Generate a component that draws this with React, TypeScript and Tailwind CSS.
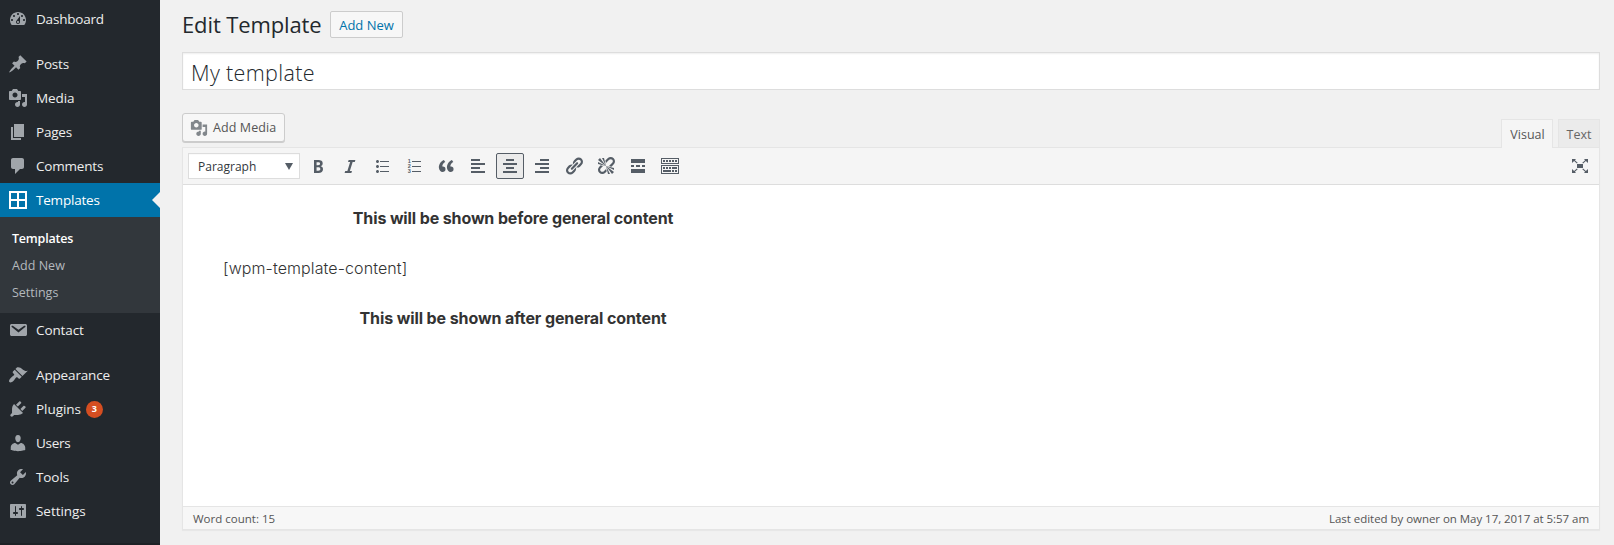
import type { ReactNode } from "react";

const paths = {
  dashboard:
    "M3.76 16h12.48c1.1-1.37 1.76-3.11 1.76-5 0-4.42-3.58-8-8-8s-8 3.58-8 8c0 1.89.66 3.63 1.76 5zM10 4c.55 0 1 .45 1 1s-.45 1-1 1-1-.45-1-1 .45-1 1-1zM6 6c.55 0 1 .45 1 1s-.45 1-1 1-1-.45-1-1 .45-1 1-1zm8 0c.55 0 1 .45 1 1s-.45 1-1 1-1-.45-1-1 .45-1 1-1zm-5.37 5.55L12 7v6c0 1.1-.9 2-2 2s-2-.9-2-2c0-.57.24-1.08.63-1.45zM4 10c.55 0 1 .45 1 1s-.45 1-1 1-1-.45-1-1 .45-1 1-1zm12 0c.55 0 1 .45 1 1s-.45 1-1 1-1-.45-1-1 .45-1 1-1zm-5 3c0-.55-.45-1-1-1s-1 .45-1 1 .45 1 1 1 1-.45 1-1z",
  posts:
    "M10.44 3.02l1.82-1.82 6.36 6.35-1.83 1.82c-1.05-.68-2.48-.57-3.41.36l-.75.75c-.92.93-1.04 2.35-.35 3.41l-1.83 1.82-2.41-2.41-2.8 2.79c-.42.42-3.38 2.71-3.8 2.29s1.86-3.39 2.28-3.81l2.79-2.79L4.1 9.36l1.83-1.82c1.05.69 2.48.57 3.4-.36l.75-.75c.93-.92 1.05-2.35.36-3.41z",
  media:
    "M13 11V4c0-.55-.45-1-1-1h-1.67L9 1H5L3.67 3H2c-.55 0-1 .45-1 1v7c0 .55.45 1 1 1h10c.55 0 1-.45 1-1zM7 4.5c1.38 0 2.5 1.12 2.5 2.5S8.38 9.5 7 9.5 4.5 8.38 4.5 7 5.62 4.5 7 4.5zM14 6h5v10.5c0 1.38-1.12 2.5-2.5 2.5S14 17.88 14 16.5s1.12-2.5 2.5-2.5c.17 0 .34.02.5.05V9h-3V6zm-4 8.05V13h2v3.5c0 1.38-1.12 2.5-2.5 2.5S7 17.88 7 16.5 8.12 14 9.5 14c.17 0 .34.02.5.05z",
  pages: "M6 15V2h10v13H6zm-1 1h8v2H3V5h2v11z",
  comments:
    "M5 2h9c1.1 0 2 .9 2 2v7c0 1.1-.9 2-2 2h-2l-5 5v-5H5c-1.1 0-2-.9-2-2V4c0-1.1.9-2 2-2z",
  grid: "M1 1h18v18H1V1zM3 3v6h6V3H3zm8 0v6h6V3h-6zM3 11v6h6v-6H3zm8 0v6h6v-6h-6z",
  email:
    "M3.87 4h13.25C18.37 4 19 4.59 19 5.79v8.42c0 1.19-.63 1.79-1.88 1.79H3.87c-1.25 0-1.88-.6-1.88-1.79V5.79c0-1.2.63-1.79 1.88-1.79zm6.62 8.6l6.74-5.53c.24-.2.43-.66.13-1.07-.29-.41-.82-.42-1.17-.17l-5.7 3.86L4.8 5.83c-.35-.25-.88-.24-1.17.17-.3.41-.11.87.13 1.07z",
  appearance:
    "M14.48 11.06L7.41 3.99l1.5-1.5c.5-.56 2.3-.47 3.51.32 1.21.8 1.43 1.28 2.91 2.1 1.18.64 2.45 1.26 4.45.85zm-.71.71L6.7 4.7 4.93 6.47c-.39.39-.39 1.02 0 1.41l1.06 1.06c.39.39.39 1.03 0 1.42-.6.6-1.43 1.11-2.21 1.69-.35.26-.7.53-1.01.84C1.43 14.23.4 16.08 1.4 17.07c.99 1 2.84-.03 4.18-1.36.31-.31.58-.66.85-1.02.57-.78 1.08-1.61 1.69-2.21.39-.39 1.02-.39 1.41 0l1.06 1.06c.39.39 1.02.39 1.41 0z",
  plugins:
    "M13.11 4.36L9.87 7.6 8 5.73l3.24-3.24c.35-.34 1.05-.2 1.56.32.52.51.66 1.21.31 1.55zm-8 1.77l.91-1.12 9.01 9.01-1.19.84c-.71.71-2.63 1.16-3.82 1.16H6.14L4.9 17.26c-.59.59-1.54.59-2.12 0-.59-.58-.59-1.53 0-2.12l1.24-1.24v-3.88c0-1.13.4-3.19 1.09-3.89zm7.26 3.97l3.24-3.24c.34-.35 1.04-.21 1.55.31.52.51.66 1.21.31 1.55l-3.24 3.25z",
  users:
    "M10 9.25c-2.27 0-2.73-3.44-2.73-3.44C7 4.02 7.82 2 9.97 2c2.16 0 2.98 2.02 2.71 3.81 0 0-.41 3.44-2.68 3.44zm0 2.57L12.72 10c2.39 0 4.52 2.33 4.52 4.53v2.49s-3.65 1.13-7.24 1.13c-3.65 0-7.24-1.13-7.24-1.13v-2.49c0-2.25 1.94-4.48 4.47-4.48z",
  tools:
    "M16.68 9.77c-1.34 1.34-3.3 1.67-4.95.99l-5.41 6.52c-.99.99-2.59.99-3.58 0s-.99-2.59 0-3.57l6.52-5.42c-.68-1.65-.35-3.61.99-4.95 1.28-1.28 3.12-1.62 4.72-1.06l-2.89 2.89 2.82 2.82 2.86-2.87c.53 1.58.18 3.39-1.08 4.65zM3.81 16.21c.4.39 1.04.39 1.43 0 .4-.4.4-1.04 0-1.43-.39-.4-1.03-.4-1.43 0-.39.39-.39 1.03 0 1.43z",
  settings:
    "M18 16V4c0-.55-.45-1-1-1H3c-.55 0-1 .45-1 1v12c0 .55.45 1 1 1h14c.55 0 1-.45 1-1zM8 11h1c.55 0 1 .45 1 1s-.45 1-1 1H8v1.5c0 .28-.22.5-.5.5s-.5-.22-.5-.5V13H6c-.55 0-1-.45-1-1s.45-1 1-1h1V5.5c0-.28.22-.5.5-.5s.5.22.5.5V11zm5-2h-1c-.55 0-1-.45-1-1s.45-1 1-1h1V5.5c0-.28.22-.5.5-.5s.5.22.5.5V7h1c.55 0 1 .45 1 1s-.45 1-1 1h-1v5.5c0 .28-.22.5-.5.5s-.5-.22-.5-.5V9z",
  bold: "M6 4v13h4.54c1.37 0 2.46-.33 3.26-1 .8-.66 1.2-1.58 1.2-2.77 0-.84-.17-1.51-.51-2.01s-.9-.85-1.67-1.03v-.09c.57-.1 1.02-.4 1.36-.9s.51-1.13.51-1.91c0-1.14-.39-1.98-1.17-2.5C12.75 4.26 11.5 4 9.78 4H6zm2.57 5.15V6.26h1.36c.73 0 1.27.11 1.61.32.34.22.51.58.51 1.07 0 .54-.16.92-.47 1.15s-.82.35-1.51.35h-1.5zm0 2.19h1.6c1.44 0 2.16.53 2.16 1.61 0 .6-.17 1.05-.51 1.34s-.86.43-1.57.43H8.57v-3.38z",
  italic: "M14.78 6h-2.13l-2.8 9h2.12l-.62 2H4.6l.62-2h2.14l2.8-9H8.03l.62-2h6.75z",
  bullets:
    "M5.5 7C4.67 7 4 6.33 4 5.5 4 4.68 4.67 4 5.5 4 6.32 4 7 4.68 7 5.5 7 6.33 6.32 7 5.5 7zM8 5h9v1H8V5zm-2.5 7c-.83 0-1.5-.67-1.5-1.5C4 9.68 4.67 9 5.5 9c.82 0 1.5.68 1.5 1.5 0 .83-.68 1.5-1.5 1.5zM8 10h9v1H8v-1zm-2.5 7c-.83 0-1.5-.67-1.5-1.5 0-.82.67-1.5 1.5-1.5.82 0 1.5.68 1.5 1.5 0 .83-.68 1.5-1.5 1.5zM8 15h9v1H8v-1z",
  quote:
    "M9.49 13.22c0-.74-.2-1.38-.61-1.9-.62-.78-1.83-.88-2.53-.72-.29-1.65 1.11-3.75 2.92-4.65L7.88 4c-2.73 1.3-5.42 4.28-4.96 8.05C3.21 14.43 4.59 16 6.54 16c.85 0 1.56-.25 2.12-.75s.83-1.18.83-2.03zm8.05 0c0-.74-.2-1.38-.61-1.9-.63-.78-1.83-.88-2.53-.72-.29-1.65 1.11-3.75 2.92-4.65L15.93 4c-2.73 1.3-5.41 4.28-4.95 8.05.29 2.38 1.66 3.95 3.61 3.95.85 0 1.56-.25 2.12-.75s.83-1.18.83-2.03z",
  left: "M12 5V3H3v2h9zm5 4V7H3v2h14zm-5 4v-2H3v2h9zm5 4v-2H3v2h14z",
  center: "M14 5V3H6v2h8zm3 4V7H3v2h14zm-3 4v-2H6v2h8zm3 4v-2H3v2h14z",
  right: "M17 5V3H8v2h9zm0 4V7H3v2h14zm0 4v-2H8v2h9zm0 4v-2H3v2h14z",
  link: "M17.74 2.76c1.68 1.69 1.68 4.41 0 6.1l-1.53 1.52c-1.12 1.12-2.7 1.47-4.14 1.09l2.62-2.61.76-.77.76-.76c.84-.84.84-2.2 0-3.04-.84-.85-2.2-.85-3.04 0l-.77.76-3.38 3.38c-.37-1.44-.02-3.02 1.1-4.14l1.52-1.53c1.69-1.68 4.42-1.68 6.1 0zM8.59 13.43l5.34-5.34c.42-.42.42-1.1 0-1.52-.44-.43-1.13-.39-1.53 0l-5.33 5.34c-.42.42-.42 1.1 0 1.52.44.43 1.13.39 1.52 0zm-.76 2.29l4.14-4.15c.38 1.44.03 3.02-1.09 4.14l-1.52 1.53c-1.69 1.68-4.41 1.68-6.1 0-1.68-1.68-1.68-4.42 0-6.1l1.53-1.52c1.12-1.12 2.7-1.47 4.14-1.1l-4.14 4.15c-.85.84-.85 2.2 0 3.05.84.84 2.2.84 3.04 0z",
  unlink:
    "M17.74 2.26c1.68 1.69 1.68 4.41 0 6.1l-1.53 1.52c-.32.33-.69.58-1.08.77L13 10l1.69-1.64.76-.77.76-.76c.84-.84.84-2.2 0-3.04-.84-.85-2.2-.85-3.04 0l-.77.76-.76.76L10 7l-.65-2.14c.19-.38.44-.75.77-1.07l1.52-1.53c1.69-1.68 4.42-1.68 6.1 0zM2 4l8 6-6-8zm4-2l4 8-2-8H6zM2 6l8 4-8-2V6zm7.36 7.69L10 13l.74 2.35-1.38 1.39c-1.69 1.68-4.41 1.68-6.1 0-1.68-1.68-1.68-4.42 0-6.1l1.39-1.38L7 10l-.69.64-1.52 1.53c-.85.84-.85 2.2 0 3.04.84.85 2.2.85 3.04 0zM18 16l-8-6 6 8zm-4 2l-4-8 2 8h2zm4-4l-8-4 8 2v2z",
  more: "M17 7V3H3v4h14zM6 11V9H3v2h3zm6 0V9H8v2h4zm5 0V9h-3v2h3zm0 6v-4H3v4h14z",
  sink: "M19 2v6H1V2h18zm-1 5V3H2v4h16zM5 4v2H3V4h2zm3 0v2H6V4h2zm3 0v2H9V4h2zm3 0v2h-2V4h2zm3 0v2h-2V4h2zm2 5v9H1V9h18zm-1 8v-7H2v7h16zM5 11v2H3v-2h2zm3 0v2H6v-2h2zm3 0v2H9v-2h2zm6 0v2h-5v-2h5zm-6 3v2H3v-2h8zm3 0v2h-2v-2h2zm3 0v2h-2v-2h2z",
  expand:
    "M2 3h4L4.900 4.200l2.800 2.600-.8.800-2.800-2.600L2 7zM18 3h-4l1.100 1.200-2.800 2.600.8.800 2.800-2.600L18 7zM2 17h4l-1.100-1.200 2.800-2.600-.8-.8-2.800 2.600L2 13zM18 17h-4l1.100-1.200-2.800-2.600.8-.8 2.800 2.600L18 13zM7 8h6v4H7z",
};

type IconName = keyof typeof paths;

function Icon({ name, className = "size-5" }: { name: IconName; className?: string }) {
  return (
    <svg
      viewBox="0 0 20 20"
      className={`shrink-0 ${className}`}
      fill="currentColor"
      fillRule={name === "expand" ? "nonzero" : "evenodd"}
    >
      <path d={paths[name]} />
    </svg>
  );
}

function MenuItem({
  icon,
  label,
  track,
  active,
  badge,
}: {
  icon: IconName;
  label: string;
  track: string;
  active?: boolean;
  badge?: string;
}) {
  return (
    <a className={`relative flex h-[34px] items-center pl-2 ${active ? "bg-[#0073aa] text-white" : "text-[#eee]"}`}>
      <Icon name={icon} className={`size-5 ${active ? "text-white" : "text-[#a0a5aa]"}`} />
      <span className={`ml-2 text-[13.5px] font-medium leading-[18px] ${track}`}>{label}</span>
      {badge && (
        <span className="ml-[5px] flex size-[17px] items-center justify-center rounded-full bg-[#d54e21] text-[9px] font-bold text-white">
          {badge}
        </span>
      )}
      {active && (
        <span className="absolute right-0 top-[9px] border-y-8 border-r-8 border-y-transparent border-r-[#f1f1f1]" />
      )}
    </a>
  );
}

function Tool({ children, active }: { children: ReactNode; active?: boolean }) {
  return (
    <button
      className={`flex h-[26px] w-7 shrink-0 items-center justify-center rounded-[2px] border text-[#555d66] ${
        active ? "border-[#555d66] bg-[#ebebeb]" : "border-transparent"
      }`}
    >
      {children}
    </button>
  );
}

export default function App() {
  return (
    <div className="flex h-[545px] w-[1614px] overflow-hidden bg-[#f1f1f1] font-['Open_Sans','Noto_Sans',sans-serif] text-[#444]">
      <nav className="flex w-40 shrink-0 flex-col bg-[#23282d] pt-0.5">
        <MenuItem icon="dashboard" label="Dashboard" track="tracking-[-0.2px]" />
        <div className="h-[11px]" />
        <MenuItem icon="posts" label="Posts" track="tracking-[-0.2px]" />
        <MenuItem icon="media" label="Media" track="tracking-[-0.1px]" />
        <MenuItem icon="pages" label="Pages" track="tracking-[-0.2px]" />
        <MenuItem icon="comments" label="Comments" track="tracking-[-0.2px]" />
        <MenuItem icon="grid" label="Templates" track="tracking-[-0.2px]" active />
        <div className="flex flex-col bg-[#32373c] py-[7.5px] pl-3 text-[12.5px] leading-[27px] text-[#b4b9be]">
          <a className="font-semibold tracking-[-0.2px] text-white">Templates</a>
          <a className="tracking-[0.05px]">Add New</a>
          <a>Settings</a>
        </div>
        <MenuItem icon="email" label="Contact" track="tracking-[-0.1px]" />
        <div className="h-[11px]" />
        <MenuItem icon="appearance" label="Appearance" track="tracking-[-0.15px]" />
        <MenuItem icon="plugins" label="Plugins" track="tracking-[-0.05px]" badge="3" />
        <MenuItem icon="users" label="Users" track="tracking-[-0.3px]" />
        <MenuItem icon="tools" label="Tools" track="tracking-[-0.1px]" />
        <MenuItem icon="settings" label="Settings" track="tracking-[-0.05px]" />
        <div className="mt-auto h-[2px] bg-[#1d2125]" />
      </nav>

      <main className="ml-[22px] flex w-[1418px] flex-col">
        <header className="flex h-[52px] items-start pt-[11px]">
          <h1 className="-mt-px w-[148px] whitespace-nowrap text-[22px] leading-7 tracking-[-0.12px] text-[#23282d]">
            Edit Template
          </h1>
          <button className="h-[27px] w-[73px] rounded-[2px] border border-[#ccc] bg-[#f7f7f7] pt-px text-[13px] font-medium leading-[25px] text-[#0073aa]">
            Add New
          </button>
        </header>

        <div className="h-[38px] border border-[#ddd] bg-white pl-2 pt-px text-[21.5px] font-light leading-[38px] tracking-[0.35px] text-[#23282d] shadow-[inset_0_1px_2px_rgba(0,0,0,0.07)]">
          My template
        </div>

        <div className="flex h-[57px] items-end justify-between">
          <button className="mb-[5px] flex h-[29px] w-[103px] items-center rounded-[3px] border border-[#ccc] bg-[#f7f7f7] pl-[7px] text-[12.5px] text-[#555] shadow-[0_1px_0_#ccc]">
            <Icon name="media" className="size-[18px] text-[#82878c]" />
            <span className="ml-[5px] whitespace-nowrap pt-px tracking-[0.1px]">Add Media</span>
          </button>
          <div className="z-10 -mb-px flex gap-[5px] text-[12.5px] text-[#555]">
            <span className="flex h-[29px] w-[52px] items-center justify-center border border-b-0 border-[#e5e5e5] bg-[#f5f5f5] pl-px pt-[3px]">
              Visual
            </span>
            <span className="h-[28px] w-[42px] border border-b-0 border-[#e5e5e5] bg-[#ebebeb] text-center leading-[30px] text-[#666]">
              Text
            </span>
          </div>
        </div>

        <section className="flex h-[383px] flex-col border border-[#e5e5e5] bg-white shadow-[0_1px_1px_rgba(0,0,0,0.04)]">
          <div className="flex h-[37px] shrink-0 items-center border-b border-[#ddd] bg-[#f5f5f5] pl-[5px] pr-[9px]">
            <div className="mr-1 flex h-[26px] w-28 items-center justify-between border border-[#ddd] bg-white pl-[9px] pr-[6px] text-[12px] text-[#32373c] shadow-[inset_0_1px_1px_-1px_rgba(0,0,0,0.2)]">
              <span className="pt-px">Paragraph</span>
              <span className="mt-px border-x-4 border-t-[7px] border-x-transparent border-t-[#555d66]" />
            </div>
            <div className="flex gap-1">
              <Tool>
                <Icon name="bold" />
              </Tool>
              <Tool>
                <Icon name="italic" />
              </Tool>
              <Tool>
                <Icon name="bullets" />
              </Tool>
              <Tool>
                <svg viewBox="0 0 20 20" className="size-5" fill="currentColor">
                  <path d="M8 5h9v1H8zM8 10h9v1H8zM8 15h9v1H8z" />
                  <g className="font-['Liberation_Sans',sans-serif] text-[5.5px] font-bold">
                    <text x="3.8" y="7">1</text>
                    <text x="3.8" y="12">2</text>
                    <text x="3.8" y="17">3</text>
                  </g>
                </svg>
              </Tool>
              <Tool>
                <Icon name="quote" />
              </Tool>
              <Tool>
                <Icon name="left" />
              </Tool>
              <Tool active>
                <Icon name="center" />
              </Tool>
              <Tool>
                <Icon name="right" />
              </Tool>
              <Tool>
                <Icon name="link" />
              </Tool>
              <Tool>
                <Icon name="unlink" />
              </Tool>
              <Tool>
                <Icon name="more" />
              </Tool>
              <Tool>
                <Icon name="sink" />
              </Tool>
            </div>
            <Icon name="expand" className="ml-auto size-5 text-[#555d66]" />
          </div>

          <article className="flex grow flex-col gap-[26px] pl-10 pt-[21px] font-['Inter','Liberation_Sans',sans-serif] text-[16px] leading-6 text-[#333]">
            <p className="w-[580px] text-center font-bold tracking-[-0.12px]">This will be shown before general content</p>
            <p className="w-[580px] font-light tracking-[0.1px]">[wpm-template-content]</p>
            <p className="w-[580px] text-center font-bold tracking-[-0.1px]">This will be shown after general content</p>
          </article>

          <footer className="flex h-[23px] shrink-0 items-center justify-between border-t border-[#e5e5e5] bg-[#f7f7f7] px-2.5 pt-px text-[11.5px] text-[#555]">
            <span>Word count: 15</span>
            <span className="tracking-[-0.04px]">Last edited by owner on May 17, 2017 at 5:57 am</span>
          </footer>
        </section>
      </main>
    </div>
  );
}
